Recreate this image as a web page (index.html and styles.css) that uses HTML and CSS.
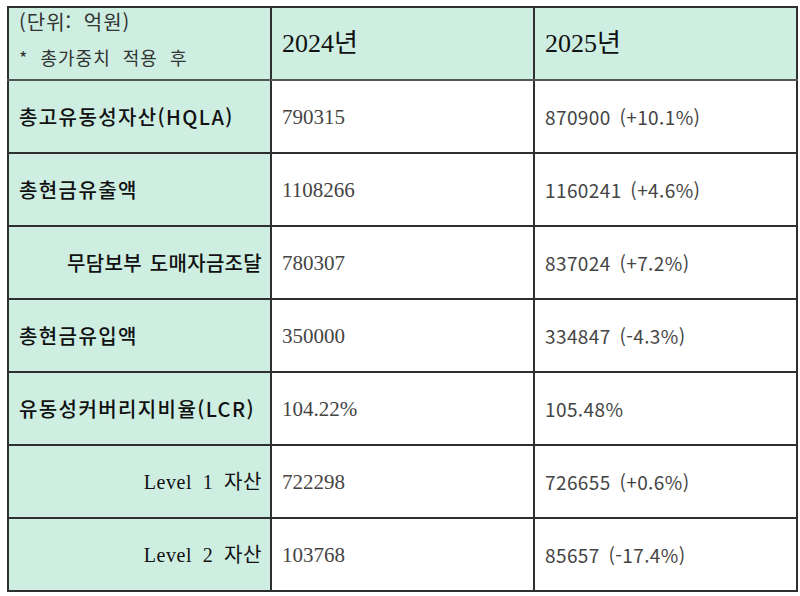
FILE: index.html
```html
<!DOCTYPE html>
<html lang="ko">
<head>
<meta charset="utf-8">
<link rel="stylesheet" href="styles.css">
</head>
<body>
<table class="lcr">
  <colgroup><col class="c1"><col class="c2"><col class="c3"></colgroup>
  <thead>
    <tr class="head">
      <th class="label unit"><div class="u1">(단위: 억원)</div><div class="u2">* 총가중치 적용 후</div></th>
      <th class="year">2024년</th>
      <th class="year">2025년</th>
    </tr>
  </thead>
  <tbody>
    <tr><th class="label">총고유동성자산(HQLA)</th><td class="v1">790315</td><td class="v2">870900 (+10.1%)</td></tr>
    <tr><th class="label">총현금유출액</th><td class="v1">1108266</td><td class="v2">1160241 (+4.6%)</td></tr>
    <tr><th class="label right">무담보부 도매자금조달</th><td class="v1">780307</td><td class="v2">837024 (+7.2%)</td></tr>
    <tr><th class="label">총현금유입액</th><td class="v1">350000</td><td class="v2">334847 (-4.3%)</td></tr>
    <tr><th class="label">유동성커버리지비율(LCR)</th><td class="v1">104.22%</td><td class="v2">105.48%</td></tr>
    <tr><th class="label right serif">Level 1 자산</th><td class="v1">722298</td><td class="v2">726655 (+0.6%)</td></tr>
    <tr><th class="label right serif">Level 2 자산</th><td class="v1">103768</td><td class="v2">85657 (-17.4%)</td></tr>
  </tbody>
</table>
</body>
</html>
```
FILE: styles.css
```css
html, body {
  margin: 0;
  padding: 0;
  background: #ffffff;
}
body {
  padding: 6px 0 0 7px;
}
.lcr {
  border-collapse: collapse;
  table-layout: fixed;
  width: 790px;
  font-family: "Noto Sans CJK KR", "Noto Sans", sans-serif;
  color: #333;
}
.c1, .c2, .c3 { width: 263px; }
.lcr tr { height: 73px; }
.lcr tr.head { height: 73px; }
.lcr th, .lcr td {
  border: 2px solid #2f2f2f;
  padding: 0 10px;
  text-align: left;
  vertical-align: middle;
  font-size: 19px;
  line-height: 26px;
  font-weight: normal;
}
.lcr tr.head th {
  background: #cdeee1;
  border-bottom-color: #555;
}
.label {
  background: #cdeee1;
  color: #111;
  font-weight: 500 !important;
  font-size: 20px !important;
  white-space: nowrap;
  letter-spacing: 1.4px;
}
.label.right {
  text-align: right !important;
  padding-right: 8px;
  word-spacing: 2px;
  letter-spacing: 0.3px;
}
.label.serif {
  font-family: "Liberation Serif", "Noto Sans CJK KR", serif;
  font-weight: normal !important;
  font-size: 20px !important;
  letter-spacing: 0.6px;
  word-spacing: 5px;
}
.unit {
  font-weight: normal !important;
  color: #333;
  letter-spacing: 1px;
}
.u1 {
  font-size: 20px;
  line-height: 24px;
  margin-top: -9px;
  word-spacing: 5px;
}
.u2 {
  font-size: 18px;
  line-height: 24px;
  margin-top: 11px;
  word-spacing: 6px;
}
.year {
  font-family: "Liberation Serif", "Noto Sans CJK KR", serif;
  font-size: 26px !important;
  color: #111;
  padding-left: 10px !important;
}
.v1 {
  font-family: "Liberation Serif", "Noto Sans CJK KR", serif;
  font-size: 21px !important;
  color: #444;
}
.v2 {
  font-family: "Noto Sans CJK KR", "Noto Sans", sans-serif;
  font-size: 19px !important;
  color: #444;
  letter-spacing: 0.4px;
  word-spacing: 3px;
}
```
